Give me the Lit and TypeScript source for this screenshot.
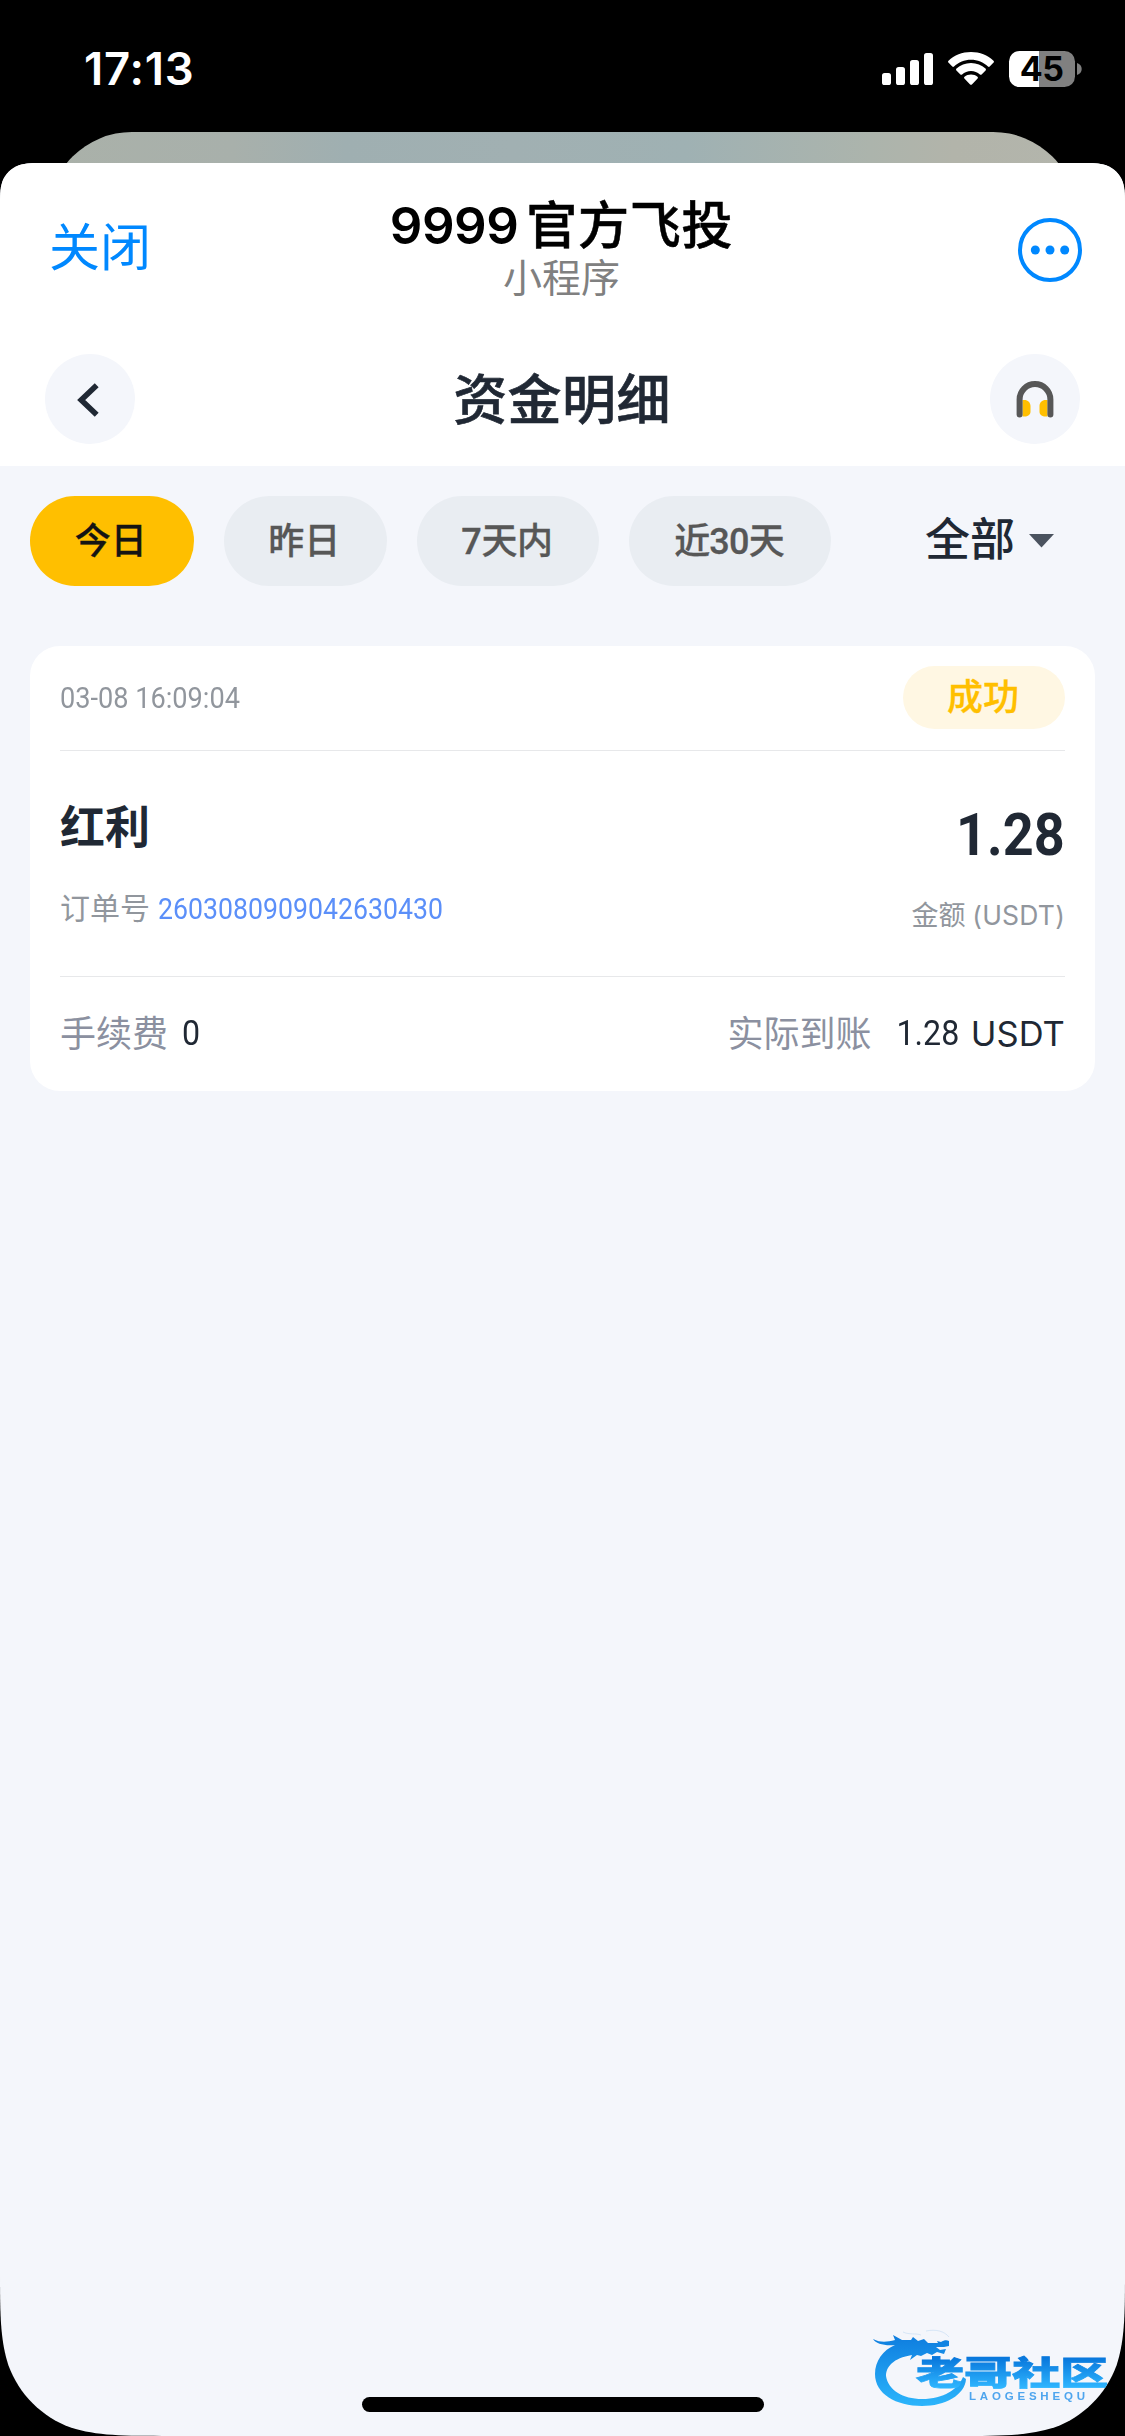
import { LitElement, html, svg, css, unsafeCSS } from "lit";
import { customElement, property, state } from "lit/decorators.js";
import { classMap } from "lit/directives/class-map.js";

const SHEET_W = 1125;
const SHEET_H = 2273;

/** Outline of a rectangle with continuous-curvature corners. */
function smoothRect(w: number, h: number, top: number, bottom: number): string {
  const k = [1.52866, 1.08849, 0.86841, 0.63149, 0.07491, 0.37283, 0.16906];
  const corner = (r: number, p: (a: number, b: number) => string) => {
    const q = (a: number, b: number) => p(a * r, b * r);
    return (
      `C${q(0, k[1])} ${q(0, k[2])} ${q(k[4], k[3])}` +
      `C${q(k[6], k[5])} ${q(k[5], k[6])} ${q(k[3], k[4])}` +
      `C${q(k[2], 0)} ${q(k[1], 0)} ${q(k[0], 0)}`
    );
  };
  const f = (x: number, y: number) => `${x.toFixed(2)} ${y.toFixed(2)}`;
  return (
    `M${f(0, k[0] * top)}` + corner(top, (a, b) => f(a, b)) +
    `L${f(w - k[0] * top, 0)}` + corner(top, (a, b) => f(w - b, a)) +
    `L${f(w, h - k[0] * bottom)}` + corner(bottom, (a, b) => f(w - a, h - b)) +
    `L${f(k[0] * bottom, h)}` + corner(bottom, (a, b) => f(b, h - a)) + "Z"
  );
}

const base = css`
  * { box-sizing: border-box; }
  svg { display: block; flex: none; }
`;

@customElement("status-bar")
class StatusBar extends LitElement {
  static styles = [base, css`
    :host {
      display: flex; justify-content: space-between; height: 132px;
      padding: 0 43px 0 84px; color: #fff;
      font-family: Inter, "Liberation Sans", sans-serif;
    }
    .time { margin-top: 42px; font-size: 45.500px; font-weight: 600; line-height: 54px; letter-spacing: 0.8px; }
    .icons { display: flex; margin-top: 51px; height: 36px; }
    .signal { margin-right: 15px; }
    .wifi { margin-right: 15px; }
    .battery {
      width: 66px; height: 36px; border-radius: 10.5px; color: #000;
      background: linear-gradient(90deg, #fff 30px, #808080 30px);
      font-size: 34px; font-weight: 700; line-height: 36px; text-align: center; letter-spacing: -0.6px;
    }
    .nub { margin: 12px 0 0 2.5px; }
  `];
  render() {
    return html`
      <div class="time">17:13</div>
      <div class="icons">
        <svg class="signal" width="51" height="36" viewBox="0 0 51 36" fill="#fff">
          <rect x="0" y="22" width="9" height="12" rx="2.6"/>
          <rect x="14" y="16" width="9" height="18" rx="2.6"/>
          <rect x="28" y="9" width="9" height="25" rx="2.6"/>
          <rect x="42" y="2" width="9" height="32" rx="2.6"/>
        </svg>
        <svg class="wifi" width="46" height="36" viewBox="0 0 46 36" fill="#fff">
          <path d="M23 1C14.200 1 6.200 4.300.5 9.700c-.6.600-.6 1.300-.1 1.900l3.900 3.900c.5.500 1.200.500 1.700 0C10.500 11.300 16.400 8.800 23 8.800s12.500 2.500 17 6.700c.5.500 1.200.500 1.700 0l3.900-3.900c.5-.6.5-1.300-.1-1.900C39.800 4.300 31.800 1 23 1z"/>
          <path d="M23 12c-5.600 0-10.700 2.100-14.500 5.600-.6.500-.6 1.300-.1 1.800l4 4c.5.500 1.200.500 1.700.100 2.400-2.200 5.500-3.500 8.900-3.500s6.500 1.300 8.900 3.500c.5.400 1.200.400 1.700-.1l4-4c.5-.5.5-1.300-.1-1.800C33.700 14.100 28.600 12 23 12z"/>
          <path d="M23 23.500c-2.500 0-4.700.8-6.500 2.300-.6.500-.6 1.200-.1 1.700l5.700 5.900c.5.600 1.300.600 1.800 0l5.700-5.900c.5-.5.5-1.200-.1-1.700-1.800-1.500-4-2.300-6.500-2.300z"/>
        </svg>
        <div class="battery">45</div>
        <svg class="nub" width="5" height="12" viewBox="0 0 5 12"><path d="M0 0c3 .8 4.700 3.200 4.700 6S3 11.200 0 12z" fill="#808080"/></svg>
      </div>`;
  }
}

@customElement("sheet-header")
class SheetHeader extends LitElement {
  static styles = [base, css`
    :host { display: block; background: #fff; height: 303px; font-family: Inter, "Noto Sans CJK SC", sans-serif; }
    .bar { display: grid; grid-template-columns: 1fr auto 1fr; align-items: center; }
    .host-bar { height: 169px; padding: 5px 43px 0 41px; }
    .close { font-size: 51px; line-height: 60px; color: #0088ff; margin: -4px 0 0 8px; font-weight: 400; }
    .names { text-align: center; margin-top: 1px; }
    .name { font-size: 51px; line-height: 56px; font-weight: 600; color: #000; display: flex; align-items: baseline; gap: 8px; }
    .digits { letter-spacing: -0.5px; }
    .cjk { letter-spacing: 0.7px; font-weight: 500; -webkit-text-stroke: 0.5px; }
    .kind { font-size: 39px; line-height: 50px; color: #808080; margin-top: -1px; }
    .more { justify-self: end; }
    .page-bar { height: 134px; padding: 0 45px; }
    .round { width: 90px; height: 90px; border-radius: 50%; background: #f4f6fb; display: flex; align-items: center; justify-content: center; }
    .end { justify-self: end; }
    .title { font-size: 54px; line-height: 60px; font-weight: 500; color: #202834; padding-top: 4px; letter-spacing: 0.4px; -webkit-text-stroke: 0.6px; margin-left: -1px; }
  `];
  render() {
    return html`
      <div class="bar host-bar">
        <div class="close">关闭</div>
        <div class="names">
          <div class="name"><span class="digits">9999</span><span class="cjk">官方飞投</span></div>
          <div class="kind">小程序</div>
        </div>
        <svg class="more" width="64" height="64" viewBox="0 0 64 64">
          <circle cx="32" cy="32" r="30" fill="none" stroke="#0088ff" stroke-width="4"/>
          <g fill="#0088ff"><circle cx="17.300" cy="32" r="4.500"/><circle cx="32" cy="32" r="4.500"/><circle cx="46.700" cy="32" r="4.500"/></g>
        </svg>
      </div>
      <div class="bar page-bar">
        <div class="round">
          <svg width="90" height="90" viewBox="0 0 90 90"><path d="M51.700 31.200L36.200 46l15.500 14.800" fill="none" stroke="#202834" stroke-width="5.600"/></svg>
        </div>
        <div class="title">资金明细</div>
        <div class="round end">
          <svg width="90" height="90" viewBox="0 0 90 90">
            <path d="M32.500 46h2c3.400 0 6 2.600 6 6v5.500c0 3.200-2.600 5-6 5h-2zM57.500 46h-2c-3.400 0-6 2.600-6 6v5.500c0 3.200 2.600 5 6 5h2z" fill="#ffbf00"/>
            <path d="M29.600 60.500V45.500a15.400 15.400 0 0 1 30.800 0v15" fill="none" stroke="#575757" stroke-width="6" stroke-linecap="round"/>
          </svg>
        </div>
      </div>`;
  }
}

@customElement("range-filter")
class RangeFilter extends LitElement {
  @state() private active = 0;
  private ranges = [
    { label: "今日", cls: "w2" },
    { label: "昨日", cls: "w2" },
    { label: "7天内", cls: "w3" },
    { label: "近30天", cls: "w4" },
  ];
  static styles = [base, css`
    :host { display: flex; align-items: center; gap: 30px; padding: 30px 71px 60px 30px; font-family: Roboto, "Noto Sans CJK SC", sans-serif; }
    .tab { height: 90px; border-radius: 45px; background: #e9edf2; color: #575757; font-size: 36px; line-height: 93px; font-weight: 500; text-align: center; white-space: nowrap; padding-right: 2px; -webkit-text-stroke: 0.3px; }
    .w2 { width: 163.500px; }
    .w3 { width: 182px; letter-spacing: -0.4px; }
    .w4 { width: 202px; letter-spacing: -0.8px; }
    .on { background: #ffbf00; color: #141414; }
    .type { margin-left: auto; display: flex; align-items: center; gap: 14px; font-size: 45px; line-height: 92px; height: 90px; font-weight: 500; color: #202834; }
  `];
  render() {
    return html`
      ${this.ranges.map((r, i) => html`
        <div class=${classMap({ tab: true, [r.cls]: true, on: i === this.active })} @click=${() => (this.active = i)}>${r.label}</div>`)}
      <div class="type">全部
        <svg width="25" height="14" viewBox="0 0 25 14"><path d="M0 0h25L12.500 13.500z" fill="#4b535f"/></svg>
      </div>`;
  }
}

interface Entry {
  time: string; status: string; kind: string; order: string;
  amount: string; unit: string; fee: string;
}

@customElement("record-card")
class RecordCard extends LitElement {
  @property({ attribute: false }) entry!: Entry;
  static styles = [base, css`
    :host { display: block; margin: 0 30px; height: 445px; padding: 0 30px; border-radius: 30px; background: #fff; color: #202834; font-family: Roboto, "Noto Sans CJK SC", sans-serif; }
    .row { display: flex; justify-content: space-between; }
    .head { height: 105px; border-bottom: 1px solid #e7e8ea; padding-top: 20px; }
    .narrow { display: inline-block; transform: scaleX(0.92); transform-origin: left; white-space: nowrap; }
    .narrow.tail { transform-origin: right; }
    .time { font-size: 29.500px; line-height: 64px; color: #91969d; }
    .badge { width: 162px; height: 63px; border-radius: 32px; background: #fff7e3; color: #ffbf00; font-size: 36px; line-height: 65px; font-weight: 500; text-align: center; padding-right: 2px; -webkit-text-stroke: 0.3px; }
    .body { height: 226px; border-bottom: 1px solid #e7e8ea; }
    .left { padding-top: 50px; }
    .kind { font-size: 45px; line-height: 56px; font-weight: 700; }
    .order { margin-top: 23px; font-size: 30px; line-height: 58px; color: #91969d; display: flex; gap: 8px; }
    .no { font-size: 29px; color: #5b8ff9; }
    .right { padding-top: 49px; text-align: right; }
    .amount { font-size: 60px; line-height: 70px; font-weight: 700; }
    .amount .narrow { transform: scaleX(0.9); }
    .unit { margin-top: 15px; font-size: 27px; line-height: 60px; color: #91969d; }
    .latin { font-family: Inter, sans-serif; }
    .unit .latin { font-size: 26.500px; letter-spacing: 0.2px; }
    .foot { height: 114px; align-items: center; font-size: 36px; line-height: 112px; }
    .pair { display: flex; }
    .label { color: #8b90a0; position: relative; top: 1px; }
    .fee { margin-left: 14px; }
    .num { font-size: 35px; }
    .net { margin-left: 20px; display: flex; gap: 11px; }
    .net .latin { font-size: 34.500px; letter-spacing: 0.1px; }
  `];
  render() {
    const e = this.entry;
    return html`
      <div class="row head"><div class="time narrow">${e.time}</div><div class="badge">${e.status}</div></div>
      <div class="row body">
        <div class="left">
          <div class="kind">${e.kind}</div>
          <div class="order"><span>订单号</span><span class="no narrow">${e.order}</span></div>
        </div>
        <div class="right">
          <div class="amount"><span class="narrow tail">${e.amount}</span></div>
          <div class="unit">金额 <span class="latin">(${e.unit})</span></div>
        </div>
      </div>
      <div class="row foot">
        <div class="pair"><span class="label">手续费</span><span class="num fee narrow">${e.fee}</span></div>
        <div class="pair"><span class="label">实际到账</span>
          <span class="net"><span class="num narrow tail">${e.amount}</span><span class="latin">${e.unit}</span></span></div>
      </div>`;
  }
}

@customElement("community-mark")
class CommunityMark extends LitElement {
  static styles = [base, css`
    .cn { font-family: "Noto Sans CJK SC", sans-serif; font-weight: 900; }
    .en { font-family: "Liberation Sans", sans-serif; font-weight: 700; }
    .soft { filter: blur(0.7px); }
  `];
  render() {
    return html`
      <svg class="soft" width="245" height="90" viewBox="0 0 245 90">
        <defs>
          <linearGradient id="ring" x1="0" y1="8" x2="0" y2="84" gradientUnits="userSpaceOnUse"><stop offset="0" stop-color="#0b78dc"/><stop offset="1" stop-color="#2bb4fb"/></linearGradient>
          <linearGradient id="word" x1="0" y1="-27" x2="0" y2="3" gradientUnits="userSpaceOnUse"><stop offset="0" stop-color="#0877dc"/><stop offset="1" stop-color="#2fb6ff"/></linearGradient>
        </defs>
        ${svg`
          <path fill="url(#ring)" d="M2 18c8 4 14 3 22 1l-2-5 9 5 9 0 2-3 5 4 6-2 4 4 10 0-1-2 4 1c3-2 6-2 8-1v5l-5 1-8 0 4 3 6-1-2 5-7-2-5 3-5-2-6 3-4-1-7 5 2-5C22 37 15 46 15 55c2 14 17 23 36 23 22 0 36-10 41-22l3 2c-1 16-21 27-44 27C25 85 4 73 4 53 4 40 12 29 24 24 14 25 5 23 2 18z"/>
          <path d="M32 11c6 3 13 1 18 3M55 10c10-2 18 0 23 6" fill="none" stroke="#a9cdef" stroke-width=".8" opacity=".5"/>
          <g transform="translate(45 64) scale(1.480 1)"><text class="cn" x="0" y="0" font-size="32.500" fill="url(#word)" stroke="url(#word)" stroke-width=".8">老哥社区</text></g>
          <text class="en" x="98" y="79" font-size="11.500" textLength="116" lengthAdjust="spacing" fill="#4ea5ee">LAOGESHEQU</text>`}
      </svg>`;
  }
}

@customElement("app-root")
class AppRoot extends LitElement {
  private entries: Entry[] = [
    { time: "03-08 16:09:04", status: "成功", kind: "红利", order: "2603080909042630430", amount: "1.28", unit: "USDT", fee: "0" },
  ];
  static styles = [base, css`
    :host { display: flex; flex-direction: column; width: 1125px; height: 2436px; overflow: hidden; background: #000; }
    .behind {
      height: 31px; margin: 0 48px; overflow: hidden; flex: none;
    }
    .behind-card {
      height: 170px; border-radius: 84px;
      background: linear-gradient(90deg, #aab1a9 0, #a8b0ab 18%, #9fafb1 29%, #a1b0b2 45%, #9fb1b3 62%, #acb4ac 80%, #b2b4aa 88%, #b3b5ac 100%);
    }
    .sheet {
      position: relative; height: 2273px; flex: none; background: #f4f6fb;
      clip-path: path("${unsafeCSS(smoothRect(SHEET_W, SHEET_H, 30, 112))}");
    }
    .home { position: absolute; left: 362px; bottom: 24px; width: 402px; height: 15px; border-radius: 8px; background: #000; }
    .mark { position: absolute; left: 871px; bottom: 25px; }
  `];
  render() {
    return html`
      <status-bar></status-bar>
      <div class="behind"><div class="behind-card"></div></div>
      <main class="sheet">
        <sheet-header></sheet-header>
        <range-filter></range-filter>
        ${this.entries.map((e) => html`<record-card .entry=${e}></record-card>`)}
        <community-mark class="mark"></community-mark>
        <div class="home"></div>
      </main>`;
  }
}
